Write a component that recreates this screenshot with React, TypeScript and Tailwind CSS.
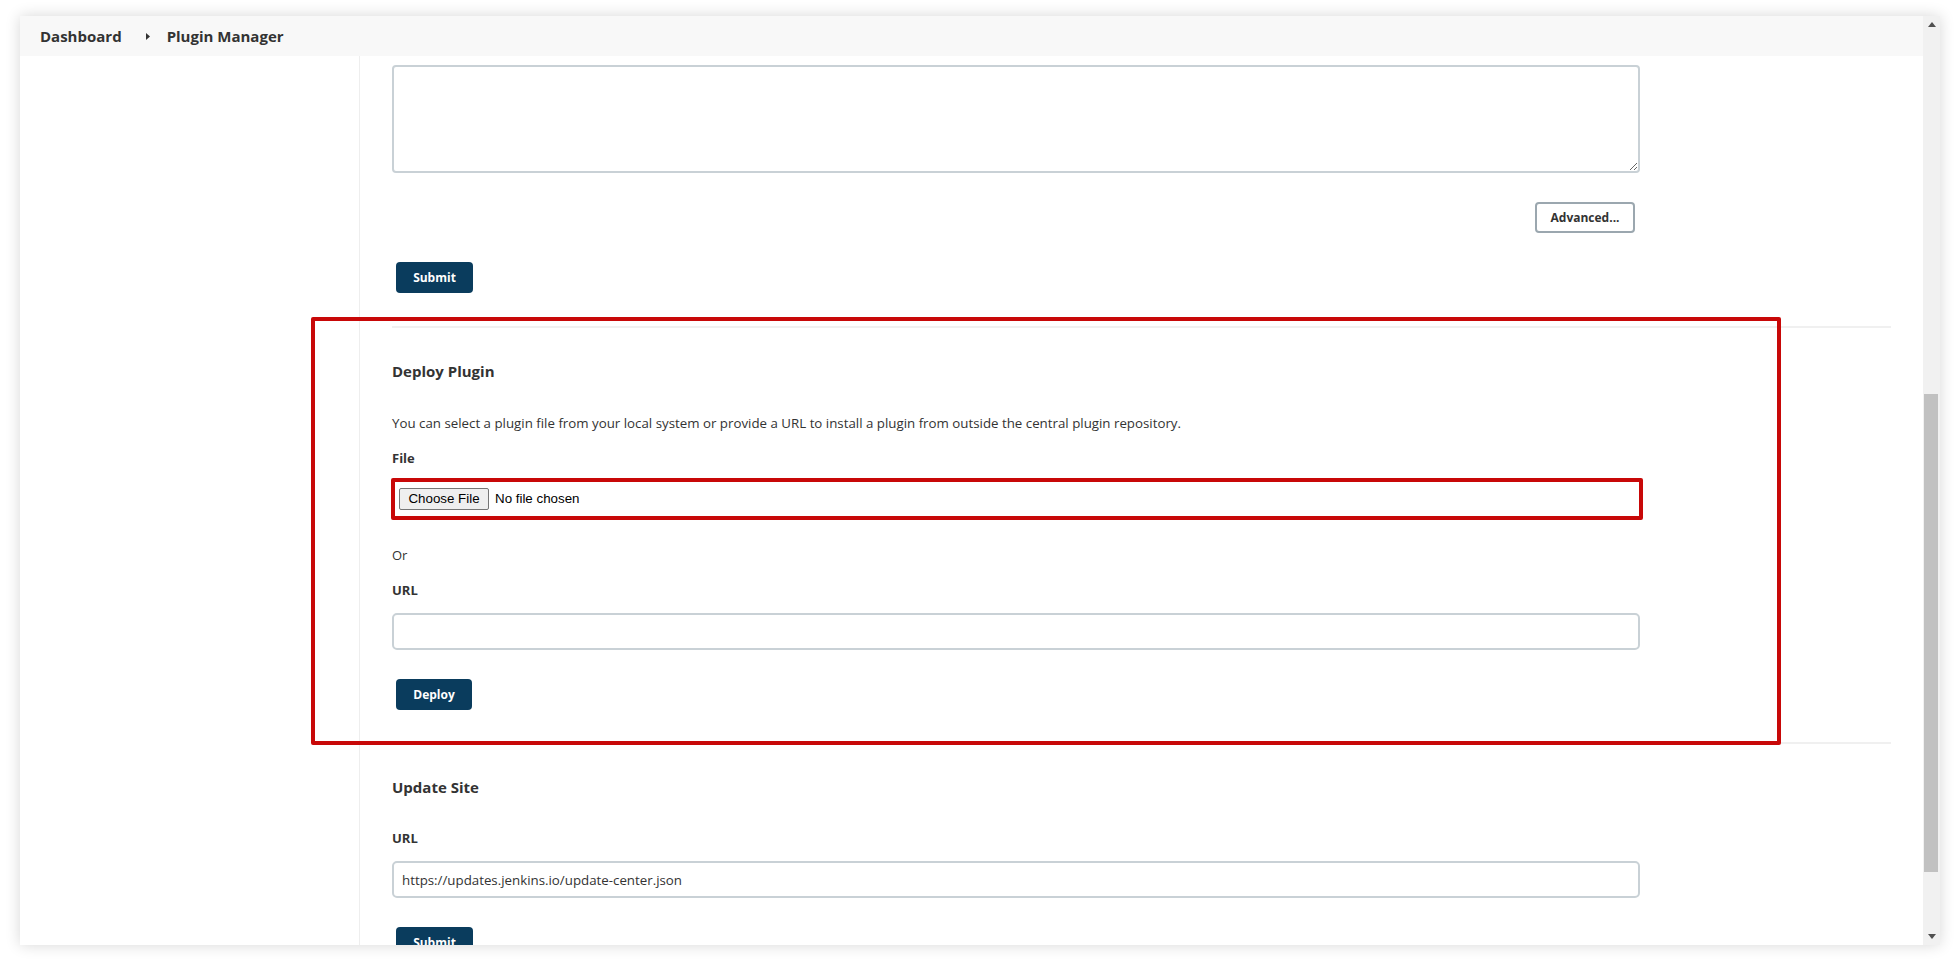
const Scrollbar = () => (
  <div className="flex h-full w-[17px] flex-col bg-[#f1f1f1]">
    <div className="flex h-[17px] items-center justify-center">
      <svg width="8" height="5" viewBox="0 0 8 5">
        <path d="M4 0 L8 5 L0 5 Z" fill="#505050" />
      </svg>
    </div>
    <div className="h-[361px]" />
    <div className="ml-[1px] h-[478px] w-[14px] bg-[#c1c1c1]" />
    <div className="flex-1" />
    <div className="flex h-[17px] items-center justify-center">
      <svg width="8" height="5" viewBox="0 0 8 5">
        <path d="M0 0 L8 0 L4 5 Z" fill="#505050" />
      </svg>
    </div>
  </div>
);

const PrimaryButton = ({ label, width }: { label: string; width: string }) => (
  <button
    className={`ml-1 flex h-[31px] items-center justify-center rounded-[4px] bg-[#0a3c5d] text-[12px] font-bold text-white ${width}`}
  >
    {label}
  </button>
);

export default function App() {
  return (
    <div className="h-[969px] w-full overflow-hidden bg-white pl-5 pt-4 font-['Open_Sans',sans-serif] text-[#333]">
      <div className="relative flex h-[929px] w-[1920px] overflow-hidden bg-white shadow-[0_0_14px_rgba(0,0,0,0.16)]">
        <div className="flex min-w-0 flex-1 flex-col">
          {/* Breadcrumb */}
          <nav className="flex h-10 shrink-0 items-center bg-[#f8f8f8] pl-5 text-[15px] font-bold">
            <span>Dashboard</span>
            <svg className="ml-[24px] mr-[17px]" width="4" height="7" viewBox="0 0 4 7">
              <path d="M0 0 L4 3.5 L0 7 Z" fill="#333" />
            </svg>
            <span>Plugin Manager</span>
          </nav>

          <div className="flex flex-1">
            <aside className="w-[340px] shrink-0 border-r border-[#eeeeee]" />

            <main className="flex-1 px-8 text-[13px]">
              {/* Advanced settings tail */}
              <textarea className="mt-[9px] block h-[108px] w-[1248px] rounded-[4px] border-2 border-[#c9d1d6] bg-white" />
              <div className="mt-[29px] flex w-[1248px] justify-end">
                <button className="mr-[5px] h-[31px] w-[100px] rounded-[4px] border-2 border-[#9ba7af] bg-white text-[12px] font-bold text-[#333]">
                  Advanced...
                </button>
              </div>
              <div className="mt-[29px]">
                <PrimaryButton label="Submit" width="w-[77px]" />
              </div>

              <div className="mt-[33px] h-[2px] bg-[#f0f0f0]" />

              {/* Deploy Plugin */}
              <h2 className="mt-[33px] text-[15px] font-bold leading-[20px]">Deploy Plugin</h2>
              <p className="mt-[32px] text-[13.3px] leading-[20px]">
                You can select a plugin file from your local system or provide a URL to install a plugin from outside the central plugin repository.
              </p>
              <div className="mt-[15px] font-bold leading-[20px]">File</div>
              <div className="relative mt-[14px] flex h-[34px] w-[1248px] items-center">
                <button className="ml-[7px] flex h-[22px] w-[90px] items-center justify-center rounded-[2px] border border-[#767676] bg-[#efefef] font-['Liberation_Sans',sans-serif] text-[13.33px] text-black">
                  Choose File
                </button>
                <span className="ml-[6px] font-['Liberation_Sans',sans-serif] text-[13.33px] text-black">
                  No file chosen
                </span>
                <div className="pointer-events-none absolute -bottom-[4px] -left-[1px] -right-[3px] -top-[4px] rounded-[2px] border-4 border-[#c80808]" />
              </div>
              <div className="mt-[29px] leading-[20px]">Or</div>
              <div className="mt-[15px] font-bold leading-[20px]">URL</div>
              <input className="mt-[13px] block h-[37px] w-[1248px] rounded-[5px] border-2 border-[#c9d1d6] bg-white" />
              <div className="mt-[29px]">
                <PrimaryButton label="Deploy" width="w-[76px]" />
              </div>

              <div className="mt-[32px] h-[2px] bg-[#f0f0f0]" />

              {/* Update Site */}
              <h2 className="mt-[33px] text-[15px] font-bold leading-[20px]">Update Site</h2>
              <div className="mt-[31px] font-bold leading-[20px]">URL</div>
              <input
                className="mt-[13px] block h-[37px] w-[1248px] rounded-[5px] border-2 border-[#c9d1d6] bg-white pl-[8px] text-[13.3px] text-[#333]"
                defaultValue="https://updates.jenkins.io/update-center.json"
              />
              <div className="mt-[29px]">
                <PrimaryButton label="Submit" width="w-[77px]" />
              </div>
            </main>
          </div>
        </div>

        <Scrollbar />

        {/* annotation around the Deploy Plugin section */}
        <div className="pointer-events-none absolute left-[291px] top-[301px] h-[428px] w-[1470px] rounded-[2px] border-4 border-[#c80808]" />
      </div>
    </div>
  );
}
